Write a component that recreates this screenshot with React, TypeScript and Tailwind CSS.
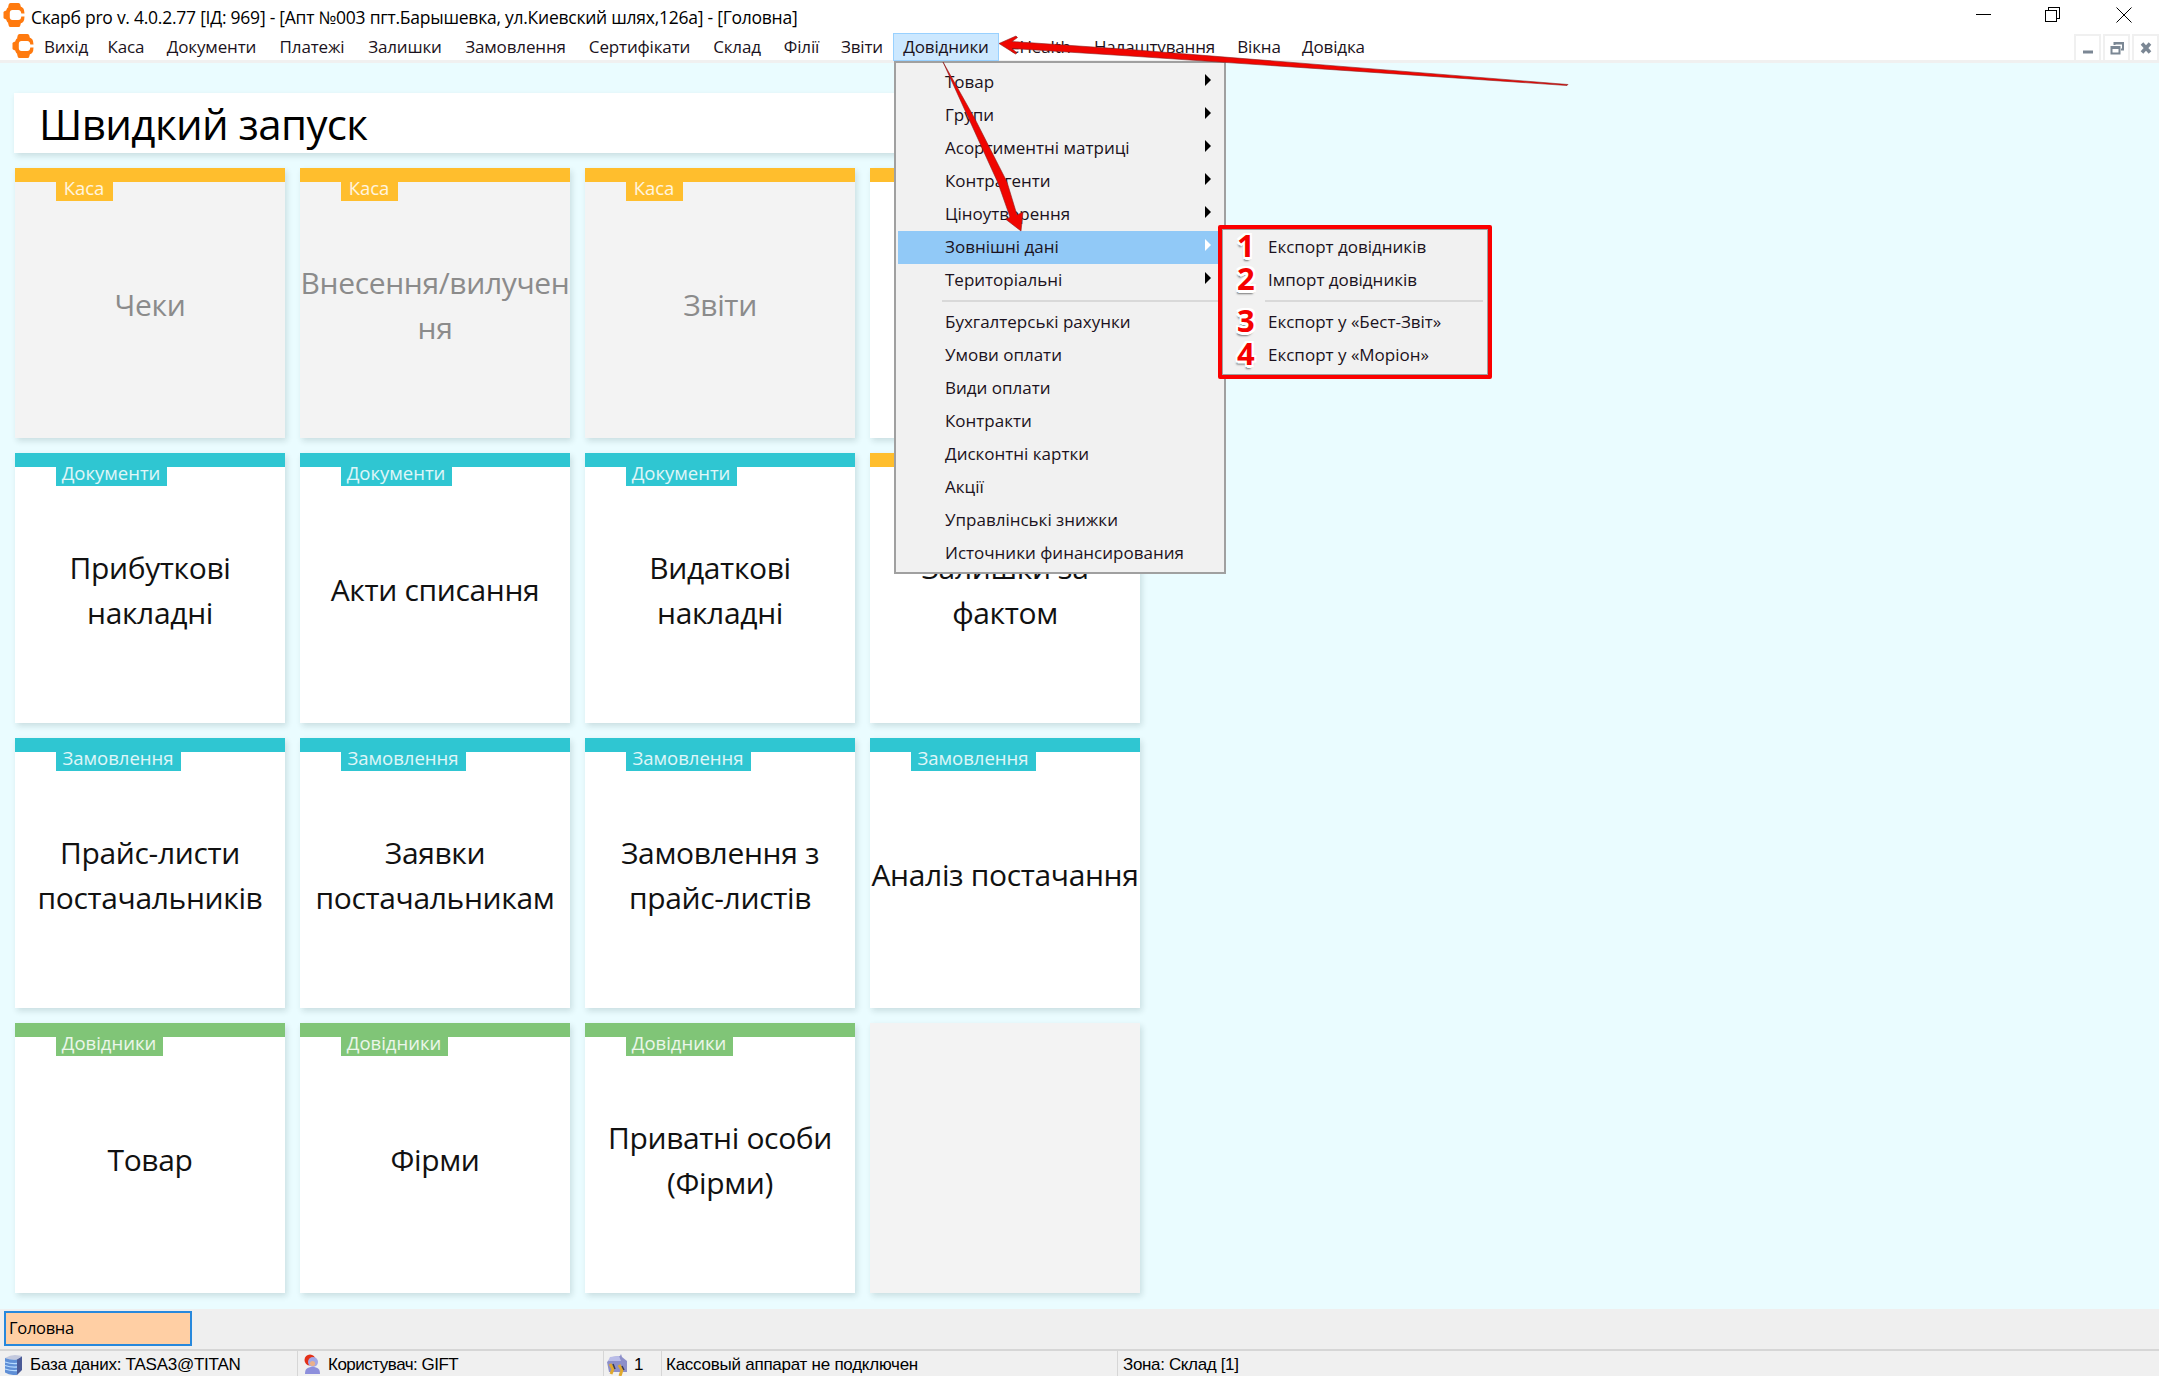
import React from "react";

const FONT = "font-['Open_Sans','Noto_Sans',sans-serif]";

type Tone = "amber" | "teal" | "green";
const tones: Record<Tone, string> = {
  amber: "bg-[#ffbe2d]",
  teal: "bg-[#2fc6d2]",
  green: "bg-[#80c577]",
};

interface Tile {
  tag?: string;
  tagClass?: string;
  tone?: Tone;
  lines: string[];
  disabled?: boolean;
}

const kasa = { tag: "Каса", tagClass: "w-[57px]", tone: "amber" as Tone };
const docs = { tag: "Документи", tagClass: "w-[111px]", tone: "teal" as Tone };
const orders = { tag: "Замовлення", tagClass: "w-[125px]", tone: "teal" as Tone };
const refs = { tag: "Довідники", tagClass: "w-[107px]", tone: "green" as Tone };

const tiles: Tile[] = [
  { ...kasa, lines: ["Чеки"], disabled: true },
  { ...kasa, lines: ["Внесення/вилучен", "ня"], disabled: true },
  { ...kasa, lines: ["Звіти"], disabled: true },
  { tone: "amber", lines: [] },
  { ...docs, lines: ["Прибуткові", "накладні"] },
  { ...docs, lines: ["Акти списання"] },
  { ...docs, lines: ["Видаткові", "накладні"] },
  { tone: "amber", lines: ["Залишки за", "фактом"] },
  { ...orders, lines: ["Прайс-листи", "постачальників"] },
  { ...orders, lines: ["Заявки", "постачальникам"] },
  { ...orders, lines: ["Замовлення з", "прайс-листів"] },
  { ...orders, lines: ["Аналіз постачання"] },
  { ...refs, lines: ["Товар"] },
  { ...refs, lines: ["Фірми"] },
  { ...refs, lines: ["Приватні особи", "(Фірми)"] },
  { lines: [], disabled: true },
];

const menuBar: [string, string][] = [
  ["Вихід", "w-[62px]"],
  ["Каса", "w-[58px]"],
  ["Документи", "w-[113px]"],
  ["Платежі", "w-[88px]"],
  ["Залишки", "w-[98px]"],
  ["Замовлення", "w-[123px]"],
  ["Сертифікати", "w-[125px]"],
  ["Склад", "w-[70px]"],
  ["Філії", "w-[59px]"],
  ["Звіти", "w-[62px]"],
  ["Довідники", "w-[106px]"],
  ["eHealth", "w-[83px]"],
  ["Налаштування", "w-[145px]"],
  ["Вікна", "w-[64px]"],
  ["Довідка", "w-[85px]"],
];

function Logo() {
  return (
    <svg className="size-6 shrink-0" viewBox="0 0 24 24" fill="#ff7a0f">
      <path d="M8.500 0h8q1.500 0 1.800 1.500l.7 3h-13l.7-3Q7 0 8.500 0z" />
      <path d="M8.500 24h8q1.500 0 1.800-1.500l.7-3h-13l.7 3Q7 24 8.500 24z" />
      <path d="M5 7.500Q1.500 8 1.500 9.500v5Q1.500 16 5 16.500z" />
      <path d="M9 3.500h8.500q5 0 5 7h-3.200q-.3-3.500-3-3.500H10.500Q7.800 7 7.800 10v4q0 3 2.700 3h5.800q2.700 0 3-3.500h3.200q0 7-5 7H9q-5 0-5-6v-5q0-6 5-6z" />
    </svg>
  );
}

function TileCard({ tag, tagClass, tone, lines, disabled }: Tile) {
  return (
    <div
      className={`flex h-[270px] w-[270px] flex-col shadow-[2px_3px_6px_rgba(0,40,40,0.14)] ${
        disabled ? "bg-[#f3f3f3] text-[#8b8b8b]" : "bg-white text-[#111]"
      }`}
    >
      {tone && (
        <div className="relative">
          <div className={`h-[13.5px] ${tones[tone]}`} />
          {tag && (
            <div
              className={`absolute top-[8px] left-[40.5px] h-[25px] ${tagClass} ${tones[tone]} text-center text-[18.5px] leading-[24px] text-white/85`}
            >
              {tag}
            </div>
          )}
        </div>
      )}
      <div className="flex flex-1 flex-col items-center justify-center pb-[10px] text-[30px] leading-[45px] tracking-[-0.35px] whitespace-nowrap">
        {lines.map((l) => (
          <div key={l}>{l}</div>
        ))}
      </div>
    </div>
  );
}

function Row({ label, arrow, active }: { label: string; arrow?: boolean; active?: boolean }) {
  return (
    <div
      className={`flex h-[33px] items-center justify-between pr-[10px] pb-[2px] pl-[47px] ${
        active ? "bg-[#91c9f7]" : ""
      }`}
    >
      <span>{label}</span>
      {arrow && (
        <svg className="mb-[4px] h-[12px] w-[8px]" viewBox="0 0 8 12">
          <path d="M1 0L7 6L1 12Z" fill={active ? "#fff" : "#000"} />
        </svg>
      )}
    </div>
  );
}

function DropDown() {
  return (
    <div className="absolute top-[61px] left-[894px] h-[513px] w-[332px] border-2 border-[#a0a0a0] bg-[#f1f1f1] px-[2px] pt-[3px]">
      <Row label="Товар" arrow />
      <Row label="Групи" arrow />
      <Row label="Асортиментні матриці" arrow />
      <Row label="Контрагенти" arrow />
      <Row label="Ціноутворення" arrow />
      <Row label="Зовнішні дані" arrow active />
      <Row label="Територіальні" arrow />
      <div className="mt-[3px] mb-[4px] ml-[44px] h-[2px] bg-[#d9d9d9]" />
      <Row label="Бухгалтерські рахунки" />
      <Row label="Умови оплати" />
      <Row label="Види оплати" />
      <Row label="Контракти" />
      <Row label="Дисконтні картки" />
      <Row label="Акції" />
      <Row label="Управлінські знижки" />
      <Row label="Источники финансирования" />
    </div>
  );
}

function SubRow({ n, label }: { n: string; label: string }) {
  return (
    <div className="flex h-[33px] items-center pb-[2px]">
      <span className="w-[45px] pb-[3px] pl-[14px] text-[31px] leading-[31px] font-bold tracking-normal text-[#f50000] [text-shadow:-2px_-2px_0_#fff,2px_-2px_0_#fff,-2px_2px_0_#fff,2px_2px_0_#fff,0_3px_0_#fff,-1px_4px_2px_#777]">
        {n}
      </span>
      <span>{label}</span>
    </div>
  );
}

function SubMenu() {
  return (
    <div className="absolute top-[225px] left-[1218px] h-[154px] w-[274px] rounded-[2px] border-[4px] border-[#fb0000] bg-[#f1f1f1]">
      <div className="h-full border border-[#a0a0a0] pt-px">
        <SubRow n="1" label="Експорт довідників" />
        <SubRow n="2" label="Імпорт довідників" />
        <div className="mt-[3px] mr-[4px] mb-[4px] ml-[42px] h-[2px] bg-[#d9d9d9]" />
        <SubRow n="3" label="Експорт у «Бест-Звіт»" />
        <SubRow n="4" label="Експорт у «Моріон»" />
      </div>
    </div>
  );
}

export default function App() {
  return (
    <div
      className={`relative flex h-[1376px] w-[2159px] flex-col overflow-hidden bg-[#eafcff] ${FONT} text-black`}
    >
      <header className="flex h-[33px] items-center bg-white">
        <div className="ml-[2px] flex h-full items-center pb-[3px]">
          <Logo />
        </div>
        <div className="ml-[5px] text-[17.5px] leading-[24px] tracking-[-0.25px] whitespace-nowrap">
          Скарб pro v. 4.0.2.77 [ІД: 969] - [Апт №003 пгт.Барышевка, ул.Киевский шлях,126а] - [Головна]
        </div>
        <svg
          className="mr-[27px] mb-[3px] ml-auto h-[16px] w-[156px]"
          viewBox="0 0 156 16"
          fill="none"
          stroke="#000"
          shapeRendering="crispEdges"
        >
          <path d="M0 7.5h15" />
          <path d="M69.5 3.5h11v11h-11zM72.5 3.5v-3h11v11h-3" />
          <path d="M140.5.5l15 15M155.5.5l-15 15" shapeRendering="auto" />
        </svg>
      </header>

      <nav className="flex h-[30px] items-start border-b-[3px] border-[#f0f0f0] bg-white text-[17px] leading-[28px] tracking-[-0.15px] text-[#1b1220]">
        <div className="mt-px ml-[11px]">
          <Logo />
        </div>
        {menuBar.map(([label, w]) => (
          <div
            key={label}
            className={`h-[28px] shrink-0 text-center whitespace-nowrap ${w} ${
              label === "Довідники" ? "border border-[#99d1ff] bg-[#cce8ff] leading-[26px]" : ""
            }`}
          >
            {label}
          </div>
        ))}
        <div className="mt-px ml-auto flex gap-[2px]">
          {[0, 1, 2].map((i) => (
            <div
              key={i}
              className="flex h-[28px] w-[27px] items-center justify-center border-2 border-[#f0f0f0] bg-white"
            >
              <svg className="size-[14px]" viewBox="0 0 14 14" fill="none" stroke="#7b8794" strokeWidth="2">
                {i === 0 && <path d="M2 11h10" strokeWidth="3" />}
                {i === 1 && <path d="M1.5 6h8v6.5h-8zM1 7h9M4.5 4V2H13v6.5h-2M4 2.5h9" />}
                {i === 2 && <path d="M3 2.5l8 9M11 2.5l-8 9" strokeWidth="3.5" />}
              </svg>
            </div>
          ))}
        </div>
      </nav>

      <main className="h-[1246px] shrink-0 pt-[30px]">
        <h1 className="ml-[14px] flex h-[60px] w-[1127px] items-center bg-white pt-[2px] pl-[25px] text-[42px] leading-[58px] tracking-[-0.6px] shadow-[2px_3px_6px_rgba(0,40,40,0.14)]">
          Швидкий запуск
        </h1>
        <div className="mt-[15px] ml-[15px] grid w-fit grid-cols-4 gap-[15px]">
          {tiles.map((t, i) => (
            <TileCard key={i} {...t} />
          ))}
        </div>
      </main>

      <div className="h-[40px] shrink-0 bg-[#efefef] pt-[2px] pl-[4px]">
        <div className="h-[35px] w-[188px] border-2 border-[#2788dc] bg-[#ffcfa4] pl-[3px] text-[16.5px] leading-[29px] tracking-[-0.3px]">
          Головна
        </div>
      </div>

      <footer className="flex h-[27px] shrink-0 border-t-2 border-[#d6d6d6] bg-[#f0f0f0] font-['Liberation_Sans',sans-serif] text-[17px] leading-[28px] whitespace-nowrap">
        <div className="flex w-[298px] border-r border-[#d6d6d6] pl-[4px]">
          <svg className="mt-[4px] mr-[7px] h-[20px] w-[19px]" viewBox="0 0 19 20">
            <path d="M13 4l5-3v14l-5 5z" fill="#4a5a96" />
            <path d="M1 3Q6 0 11 0t7 1.5L13 4.500Q6 5.500 1 3z" fill="#c3c9de" />
            <path d="M1 3q6 2.500 12 1.500V20Q6 20.500 1 17.500z" fill="#5f8fd6" />
            <path d="M1 7q6 2 12 1.500M1 10.500q6 2 12 1.500M1 14q6 2 12 1.500" stroke="#b8dcff" strokeWidth="1.300" fill="none" />
          </svg>
          <span className="tracking-[-0.25px]">База даних: TASA3@TITAN</span>
        </div>
        <div className="flex w-[306px] border-r border-[#d6d6d6] pl-[6px]">
          <svg className="mt-[3px] mr-[7px] h-[21px] w-[17px]" viewBox="0 0 17 21">
            <circle cx="6" cy="6" r="5.5" fill="#e33018" />
            <path d="M1 20c0-5 2-7 7.500-7s7.500 2 7.500 7z" fill="#8d8fdc" />
            <circle cx="9" cy="8" r="5" fill="#a3a7e6" />
            <circle cx="8.5" cy="9.5" r="2.600" fill="#eab08c" />
          </svg>
          <span className="tracking-[-0.5px]">Користувач: GIFT</span>
        </div>
        <div className="flex w-[58px] border-r border-[#d6d6d6] pl-[3px]">
          <svg className="mt-[3px] mr-[7px] h-[22px] w-[20px]" viewBox="0 0 20 22">
            <path d="M0 8L5 3l8-1 1-2 1 3 5 4v11H2z" fill="#8d8fc9" />
            <path d="M3 3l9-1 2 5H1z" fill="#b9bce8" />
            <path d="M3 10l3 5-2 5M12 11l3 5-2 6" stroke="#e0a92e" strokeWidth="3" fill="none" />
            <path d="M6 10l2 5M15 12l2 4" stroke="#3b3b55" strokeWidth="1.5" />
          </svg>
          <span>1</span>
        </div>
        <div className="w-[456px] border-r border-[#d6d6d6] pl-[4px] tracking-[-0.25px]">
          Кассовый аппарат не подключен
        </div>
        <div className="pl-[5px] tracking-[-0.35px]">Зона: Склад [1]</div>
      </footer>

      <div className="text-[17px] whitespace-nowrap text-[#1b1220]">
        <DropDown />
        <SubMenu />
      </div>

      <svg
        className="pointer-events-none absolute top-0 left-0 h-[260px] w-[1600px]"
        viewBox="0 0 1600 260"
      >
        <g fill="#f00500" stroke="#8a2020" strokeWidth="0.6">
          <path d="M999 43.5L1016 36L1017.5 37.500L1012 41.500L1130 49.500L1568 84.500L1567 85.500L1130 56L1012 48.500L1017 53L1015.500 54Z" />
          <path d="M943 62L975 119L1007 182L1017 215L1023 212L1021 231L1006 219.500L1010 217L998 183Z" />
        </g>
      </svg>
    </div>
  );
}
